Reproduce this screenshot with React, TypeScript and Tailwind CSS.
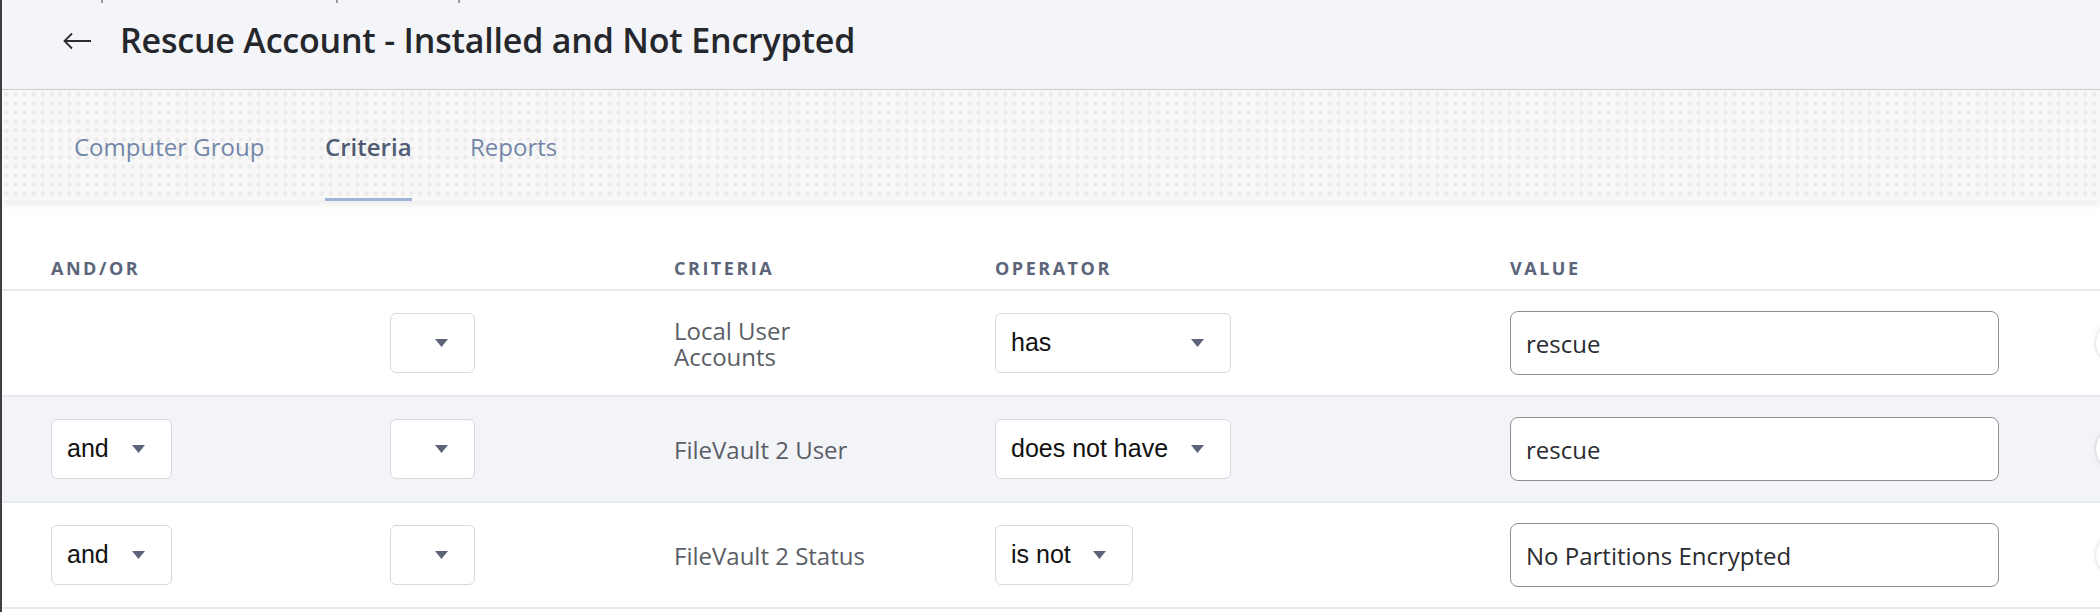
import React from "react"

type Row = {
  andOr?: string
  criteria: string
  operator: string
  operatorWidth: string
  value: string
  shaded?: boolean
}

const rows: Row[] = [
  { criteria: "Local User Accounts", operator: "has", operatorWidth: "w-[236px]", value: "rescue" },
  { andOr: "and", criteria: "FileVault 2 User", operator: "does not have", operatorWidth: "w-[236px]", value: "rescue", shaded: true },
  { andOr: "and", criteria: "FileVault 2 Status", operator: "is not", operatorWidth: "w-[138px]", value: "No Partitions Encrypted" },
]

function Caret() {
  return (
    <svg width="13" height="8" viewBox="0 0 13 8" className="shrink-0">
      <polygon points="0,0 13,0 6.5,8" fill="#5d6479" />
    </svg>
  )
}

function Select({ label, width }: { label?: string; width: string }) {
  return (
    <div
      className={`${width} h-[60px] rounded-[6px] border border-[#d6d9de] bg-white flex items-center ${
        label ? "justify-between pl-[15px]" : "justify-end"
      } pr-[26px] font-['Liberation_Sans',Arial,sans-serif] text-[25px] text-[#111]`}
    >
      {label && <span>{label}</span>}
      <Caret />
    </div>
  )
}

export default function App() {
  return (
    <div className="w-[2100px] h-[612px] overflow-hidden bg-white border-l-2 border-[#3f3f3f] font-['Open_Sans',sans-serif]">
      {/* page header */}
      <div className="relative h-[90px] bg-[#f4f5f9] border-b border-[#c9ccd3] flex items-center pb-[8px]">
        <div className="absolute top-0 left-0 flex">
          <span className="ml-[99px] w-[2px] h-[3px] bg-[#9a9ca3]" />
          <span className="ml-[233px] w-[2px] h-[3px] bg-[#9a9ca3]" />
          <span className="ml-[120px] w-[2px] h-[3px] bg-[#9a9ca3]" />
        </div>
        <svg width="30" height="20" viewBox="0 0 30 20" className="ml-[60px]">
          <path d="M29 10H2M10 2.5L2.5 10L10 17.5" fill="none" stroke="#2b2d31" strokeWidth="1.8" />
        </svg>
        <h1 className="ml-[28px] text-[34px] font-semibold text-[#25272c] tracking-[-0.2px]">
          Rescue Account - Installed and Not Encrypted
        </h1>
      </div>

      {/* tabs */}
      <div className="relative h-[111px] pt-[5px] bg-[#f8f8f8] bg-[radial-gradient(circle,#ebebeb_1.8px,transparent_2.6px)] bg-[length:9px_9px] shadow-[0_4px_7px_rgba(0,0,0,0.07)] flex text-[24px] text-[#7386a8]">
        <div className="ml-[72px] w-[251px] h-full flex items-center border-b-[3px] border-transparent">Computer Group</div>
        <div className="w-[145px] h-full flex">
          <span className="h-full flex items-center border-b-[3px] border-[#a0b4d8] text-[#4f5a73] font-semibold">Criteria</span>
        </div>
        <div className="h-full flex items-center border-b-[3px] border-transparent">Reports</div>
      </div>

      {/* criteria table */}
      <div className="grid grid-cols-[339px_284px_321px_515px_1fr] pl-[49px] h-[90px] items-end pb-[7px] border-b-2 border-[#e6eaf0] text-[18px] font-bold tracking-[0.14em] text-[#5b6479]">
        <div>AND/OR</div>
        <div />
        <div>CRITERIA</div>
        <div>OPERATOR</div>
        <div>VALUE</div>
      </div>

      {rows.map((r, i) => (
        <div
          key={i}
          className={`grid grid-cols-[339px_284px_321px_515px_1fr] pl-[49px] h-[106px] items-center border-b-2 border-[#e6eaf0] ${
            r.shaded ? "bg-[#f3f4f8]" : "bg-white"
          }`}
        >
          <div>{r.andOr && <Select label={r.andOr} width="w-[121px]" />}</div>
          <div>
            <Select width="w-[85px]" />
          </div>
          <div className="w-[210px] text-[24px] leading-[26px] text-[#5b5e66] pt-[2px]">{r.criteria}</div>
          <div>
            <Select label={r.operator} width={r.operatorWidth} />
          </div>
          <div className="flex items-center">
            <div className="w-[489px] h-[64px] shrink-0 rounded-[8px] border border-[#8e9095] bg-white flex items-center px-[15px] pt-[2px] text-[24px] text-[#2a2b2f]">
              {r.value}
            </div>
            <div className="ml-[97px] w-[40px] h-[40px] shrink-0 rounded-full bg-white shadow-[0_0_4px_rgba(0,0,0,0.2)]" />
          </div>
        </div>
      ))}
    </div>
  )
}
